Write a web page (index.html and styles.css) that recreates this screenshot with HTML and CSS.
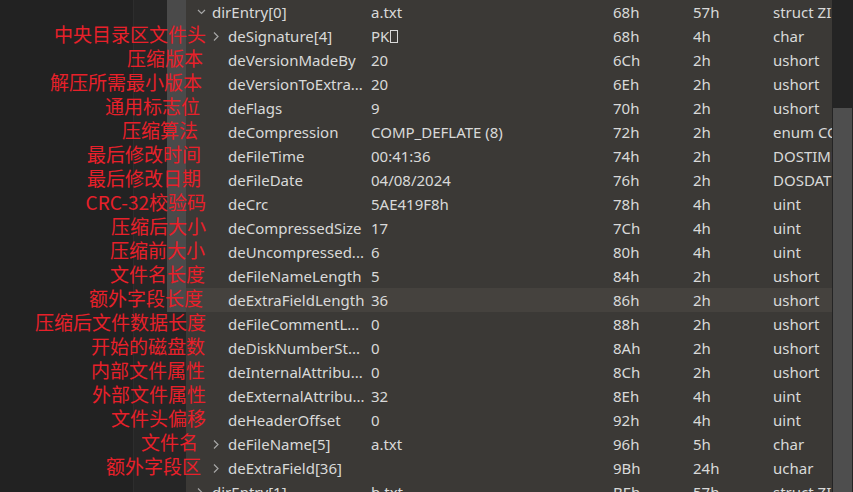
FILE: index.html
```html
<!DOCTYPE html>
<html lang="zh-CN">
<head>
<meta charset="utf-8">
<title>ZIP dirEntry</title>
<link rel="stylesheet" href="styles.css">
</head>
<body>
<div class="app">
  <div class="pane-left"></div>
  <div class="pane-mid"></div>
  <div class="pane-strip"><div class="strip-thumb"></div></div>
  <div class="tree">
    <div class="row">
      <div class="c-name d0"><span class="tw"><svg width="9" height="6" viewBox="0 0 9 6"><polyline points="1,1 4.5,4.5 8,1" /></svg></span><span>dirEntry[0]</span></div>
      <div>a.txt</div><div>68h</div><div>57h</div><div>struct ZIPDIRENTRY</div>
    </div>
    <div class="row">
      <div class="c-name"><span class="tw"><svg width="6" height="9" viewBox="0 0 6 9"><polyline points="1,0.5 5,4.5 1,8.5" /></svg></span><span>deSignature[4]</span></div>
      <div>PK<span class="nobox"></span></div><div>68h</div><div>4h</div><div>char</div>
    </div>
    <div class="row">
      <div class="c-name"><span class="tw"></span><span>deVersionMadeBy</span></div>
      <div>20</div><div>6Ch</div><div>2h</div><div>ushort</div>
    </div>
    <div class="row">
      <div class="c-name"><span class="tw"></span><span>deVersionToExtra...</span></div>
      <div>20</div><div>6Eh</div><div>2h</div><div>ushort</div>
    </div>
    <div class="row">
      <div class="c-name"><span class="tw"></span><span>deFlags</span></div>
      <div>9</div><div>70h</div><div>2h</div><div>ushort</div>
    </div>
    <div class="row">
      <div class="c-name"><span class="tw"></span><span>deCompression</span></div>
      <div>COMP_DEFLATE (8)</div><div>72h</div><div>2h</div><div>enum COMPTYPE</div>
    </div>
    <div class="row">
      <div class="c-name"><span class="tw"></span><span>deFileTime</span></div>
      <div>00:41:36</div><div>74h</div><div>2h</div><div>DOSTIME</div>
    </div>
    <div class="row">
      <div class="c-name"><span class="tw"></span><span>deFileDate</span></div>
      <div>04/08/2024</div><div>76h</div><div>2h</div><div>DOSDATE</div>
    </div>
    <div class="row">
      <div class="c-name"><span class="tw"></span><span>deCrc</span></div>
      <div>5AE419F8h</div><div>78h</div><div>4h</div><div>uint</div>
    </div>
    <div class="row">
      <div class="c-name"><span class="tw"></span><span>deCompressedSize</span></div>
      <div>17</div><div>7Ch</div><div>4h</div><div>uint</div>
    </div>
    <div class="row">
      <div class="c-name"><span class="tw"></span><span>deUncompressed...</span></div>
      <div>6</div><div>80h</div><div>4h</div><div>uint</div>
    </div>
    <div class="row">
      <div class="c-name"><span class="tw"></span><span>deFileNameLength</span></div>
      <div>5</div><div>84h</div><div>2h</div><div>ushort</div>
    </div>
    <div class="row hover">
      <div class="c-name"><span class="tw"></span><span>deExtraFieldLength</span></div>
      <div>36</div><div>86h</div><div>2h</div><div>ushort</div>
    </div>
    <div class="row">
      <div class="c-name"><span class="tw"></span><span>deFileCommentL...</span></div>
      <div>0</div><div>88h</div><div>2h</div><div>ushort</div>
    </div>
    <div class="row">
      <div class="c-name"><span class="tw"></span><span>deDiskNumberSt...</span></div>
      <div>0</div><div>8Ah</div><div>2h</div><div>ushort</div>
    </div>
    <div class="row">
      <div class="c-name"><span class="tw"></span><span>deInternalAttribu...</span></div>
      <div>0</div><div>8Ch</div><div>2h</div><div>ushort</div>
    </div>
    <div class="row">
      <div class="c-name"><span class="tw"></span><span>deExternalAttribu...</span></div>
      <div>32</div><div>8Eh</div><div>4h</div><div>uint</div>
    </div>
    <div class="row">
      <div class="c-name"><span class="tw"></span><span>deHeaderOffset</span></div>
      <div>0</div><div>92h</div><div>4h</div><div>uint</div>
    </div>
    <div class="row">
      <div class="c-name"><span class="tw"><svg width="6" height="9" viewBox="0 0 6 9"><polyline points="1,0.5 5,4.5 1,8.5" /></svg></span><span>deFileName[5]</span></div>
      <div>a.txt</div><div>96h</div><div>5h</div><div>char</div>
    </div>
    <div class="row">
      <div class="c-name"><span class="tw"><svg width="6" height="9" viewBox="0 0 6 9"><polyline points="1,0.5 5,4.5 1,8.5" /></svg></span><span>deExtraField[36]</span></div>
      <div></div><div>9Bh</div><div>24h</div><div>uchar</div>
    </div>
    <div class="row">
      <div class="c-name d0"><span class="tw"><svg width="6" height="9" viewBox="0 0 6 9"><polyline points="1,0.5 5,4.5 1,8.5" /></svg></span><span>dirEntry[1]</span></div>
      <div>b.txt</div><div>BEh</div><div>57h</div><div>struct ZIPDIRENTRY</div>
    </div>
  </div>
  <div class="vscroll"><div class="vthumb"></div></div>

  <div class="notes">
    <div class="note">中央目录区文件头</div>
    <div class="note p3">压缩版本</div>
    <div class="note p4">解压所需最小版本</div>
    <div class="note p6">通用标志位</div>
    <div class="note p8">压缩算法</div>
    <div class="note p5">最后修改时间</div>
    <div class="note p5">最后修改日期</div>
    <div class="note">CRC-32校验码</div>
    <div class="note">压缩后大小</div>
    <div class="note p1">压缩前大小</div>
    <div class="note p1">文件名长度</div>
    <div class="note p3">额外字段长度</div>
    <div class="note">压缩后文件数据长度</div>
    <div class="note p1">开始的磁盘数</div>
    <div class="note p1">内部文件属性</div>
    <div class="note">外部文件属性</div>
    <div class="note">文件头偏移</div>
    <div class="note p8">文件名</div>
    <div class="note p5">额外字段区</div>
  </div>
</div>
</body>
</html>
```

FILE: styles.css
```css
html, body {
  margin: 0;
  padding: 0;
  background: #222222;
  overflow: hidden;
}

.app {
  position: relative;
  display: flex;
  width: 853px;
  height: 492px;
  overflow: hidden;
}

.pane-left {
  width: 133px;
  flex: none;
  background: #222222;
  border-right: 1px solid #2d2d2d;
}

.pane-mid {
  width: 33px;
  flex: none;
  background: #262626;
}

.pane-strip {
  width: 19px;
  flex: none;
  background: #262626;
}

.strip-thumb {
  width: 19px;
  height: 312px;
  background: #4a4a4a;
}

.tree {
  flex: 1;
  min-width: 0;
  background: #3b3936;
  padding-top: 0;
  font-family: "Noto Sans", "Open Sans", sans-serif;
  font-size: 15px;
  color: #d9d9d9;
  overflow: hidden;
}

.row {
  display: grid;
  grid-template-columns: 185px 242px 80px 80px 1fr;
  height: 24px;
  align-items: center;
  white-space: nowrap;
}

.row > div {
  overflow: hidden;
}

.row.hover {
  background: #45423e;
}

.c-name {
  display: flex;
  align-items: center;
  padding-left: 27px;
}

.c-name.d0 {
  padding-left: 11px;
}

.tw {
  width: 15px;
  flex: none;
  display: flex;
  align-items: center;
}

.tw svg polyline {
  fill: none;
  stroke: #a6a6a6;
  stroke-width: 1.2;
}

.nobox {
  display: inline-block;
  width: 6px;
  height: 11px;
  border: 1px solid #d9d9d9;
  margin-left: 1px;
  vertical-align: -1px;
}

.vscroll {
  width: 21px;
  flex: none;
  background: #242424;
  padding-top: 108px;
  box-sizing: border-box;
}

.vthumb {
  margin-left: 1px;
  width: 19px;
  height: 400px;
  background: #4e4e4e;
}

.notes {
  position: absolute;
  left: 0;
  top: 22px;
  width: 206px;
  text-align: right;
  font-family: "Noto Sans CJK SC", "Noto Sans", sans-serif;
  font-size: 19px;
  line-height: 24px;
  color: #e8202a;
}

.note.p1 { padding-right: 1px; }
.note.p3 { padding-right: 3px; }
.note.p4 { padding-right: 4px; }
.note.p5 { padding-right: 5px; }
.note.p6 { padding-right: 6px; }
.note.p8 { padding-right: 8px; }
```
